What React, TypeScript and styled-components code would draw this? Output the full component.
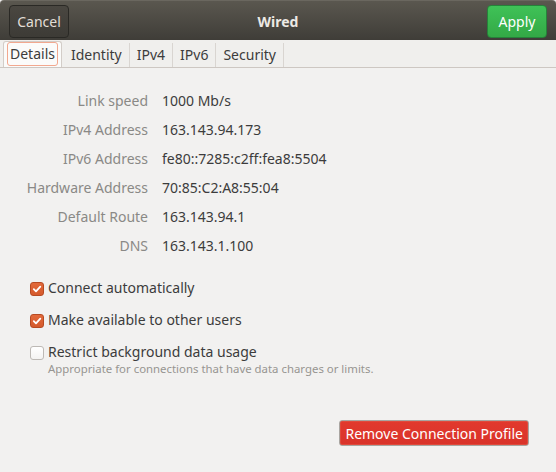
import React from 'react'
import styled, { createGlobalStyle, css } from 'styled-components'

const GlobalStyle = createGlobalStyle`
  html, body {
    margin: 0;
    padding: 0;
    background: #f2f1f0;
  }
  body {
    font-family: 'Noto Sans', 'DejaVu Sans', sans-serif;
    font-size: 14px;
    color: #3c3c3c;
  }
`

const Window = styled.div`
  width: 556px;
  height: 472px;
  display: flex;
  flex-direction: column;
  background: #f2f1f0;
  overflow: hidden;
`

const HeaderBar = styled.header`
  height: 40px;
  box-sizing: border-box;
  padding: 4px 9px 3px;
  display: flex;
  align-items: center;
  justify-content: space-between;
  background: linear-gradient(#5a574f, #3f3d38);
  border-top: 1px solid #6a675f;
  border-radius: 4px 4px 0 0;
`

const HeaderButton = styled.button<{ $suggested?: boolean }>(
  ({ $suggested }) => css`
    width: 60px;
    height: 33px;
    border-radius: 4px;
    font-family: inherit;
    font-size: 14px;
    padding: 0;
    cursor: pointer;
    ${$suggested
      ? css`
          background: linear-gradient(#3fc257, #33a946);
          border: 1px solid #26823a;
          color: #ffffff;
        `
      : css`
          background: linear-gradient(#4a4741, #3d3b36);
          border: 1px solid #2a2925;
          color: #e2ded6;
        `}
  `,
)

const Title = styled.h1`
  margin: 0;
  font-size: 14px;
  font-weight: bold;
  color: #ece9e4;
`

const TabStrip = styled.nav`
  height: 27px;
  display: flex;
  align-items: stretch;
  padding-left: 3px;
  border-bottom: 1px solid #cdc7c2;
  background: #f0efed;
`

const Tab = styled.div<{ $active?: boolean }>(
  ({ $active }) => css`
    display: flex;
    align-items: center;
    padding: 0 7px 2px;
    margin-top: 3px;
    border-right: 1px solid #d9d5d1;
    color: #3c3c3c;
    ${$active &&
    css`
      background: #fbfbfa;
      border: 1px solid #d3cdc8;
      border-bottom: none;
      border-radius: 3px 3px 0 0;
      padding: 0 3px 1px;
      margin: 1px 2px 0 0;
    `}
  `,
)

const TabLabel = styled.span<{ $focused?: boolean }>(
  ({ $focused }) => css`
    padding: 1px 2px 2px;
    border-radius: 3px;
    border: 1px solid ${$focused ? '#f2a88f' : 'transparent'};
    ${!$focused && 'padding: 0; border: none;'}
  `,
)

const Content = styled.main`
  flex: 1;
  display: flex;
  flex-direction: column;
  padding: 23px 0 0 0;
`

const InfoGrid = styled.dl`
  margin: 0;
  display: grid;
  grid-template-columns: 148px auto;
  column-gap: 14px;
  row-gap: 9px;
  align-items: center;
`

const InfoLabel = styled.dt`
  text-align: right;
  color: #8a8986;
  line-height: 20px;
`

const InfoValue = styled.dd`
  margin: 0;
  color: #3c3c3c;
  line-height: 20px;
`

const Options = styled.div`
  display: flex;
  flex-direction: column;
  gap: 12px;
  padding: 22px 0 0 30px;
`

const Option = styled.label`
  display: flex;
  align-items: flex-start;
  gap: 4px;
`

const Box = styled.span<{ $checked?: boolean }>(
  ({ $checked }) => css`
    flex: none;
    width: 12px;
    height: 12px;
    margin-top: 4px;
    border-radius: 3px;
    display: flex;
    align-items: center;
    justify-content: center;
    ${$checked
      ? css`
          background: linear-gradient(#e2693a, #d55a2c);
          border: 1px solid #b74a22;
        `
      : css`
          background: linear-gradient(#ffffff, #f4f3f2);
          border: 1px solid #bdb9b5;
        `}
  `,
)

const OptionText = styled.div`
  display: flex;
  flex-direction: column;
  line-height: 20px;
  font-size: 14px;
`

const OptionTitle = styled.span`
  line-height: 18px;
  margin-top: 1px;
`

const OptionHint = styled.span`
  font-size: 11.4px;
  line-height: 14px;
  margin-top: 1px;
  color: #979591;
`

const Footer = styled.div`
  margin-top: auto;
  display: flex;
  justify-content: flex-end;
  padding: 0 27px 26px 0;
`

const DangerButton = styled.button`
  height: 26px;
  padding: 0 5px;
  border-radius: 3px;
  border: 1px solid #a9a5a1;
  box-shadow: inset 0 0 0 1px #e04a3c;
  background: linear-gradient(#e2392d, #d9332a);
  color: #ffffff;
  font-family: inherit;
  font-size: 14px;
`

const Check = () => (
  <svg width="10" height="10" viewBox="0 0 10 10">
    <path
      d="M1.8 5.2 L4 7.4 L8.3 2.6"
      fill="none"
      stroke="#ffffff"
      strokeWidth="1.8"
      strokeLinecap="round"
      strokeLinejoin="round"
    />
  </svg>
)

const details: [string, string][] = [
  ['Link speed', '1000 Mb/s'],
  ['IPv4 Address', '163.143.94.173'],
  ['IPv6 Address', 'fe80::7285:c2ff:fea8:5504'],
  ['Hardware Address', '70:85:C2:A8:55:04'],
  ['Default Route', '163.143.94.1'],
  ['DNS', '163.143.1.100'],
]

const tabs = ['Details', 'Identity', 'IPv4', 'IPv6', 'Security']

export default function App() {
  return (
    <>
      <GlobalStyle />
      <Window>
        <HeaderBar>
          <HeaderButton>Cancel</HeaderButton>
          <Title>Wired</Title>
          <HeaderButton $suggested>Apply</HeaderButton>
        </HeaderBar>
        <TabStrip>
          {tabs.map((t, i) => (
            <Tab key={t} $active={i === 0}>
              <TabLabel $focused={i === 0}>{t}</TabLabel>
            </Tab>
          ))}
        </TabStrip>
        <Content>
          <InfoGrid>
            {details.map(([label, value]) => (
              <React.Fragment key={label}>
                <InfoLabel>{label}</InfoLabel>
                <InfoValue>{value}</InfoValue>
              </React.Fragment>
            ))}
          </InfoGrid>
          <Options>
            <Option>
              <Box $checked>
                <Check />
              </Box>
              <OptionText>Connect automatically</OptionText>
            </Option>
            <Option>
              <Box $checked>
                <Check />
              </Box>
              <OptionText>Make available to other users</OptionText>
            </Option>
            <Option>
              <Box />
              <OptionText>
                <OptionTitle>Restrict background data usage</OptionTitle>
                <OptionHint>
                  Appropriate for connections that have data charges or limits.
                </OptionHint>
              </OptionText>
            </Option>
          </Options>
          <Footer>
            <DangerButton>Remove Connection Profile</DangerButton>
          </Footer>
        </Content>
      </Window>
    </>
  )
}
